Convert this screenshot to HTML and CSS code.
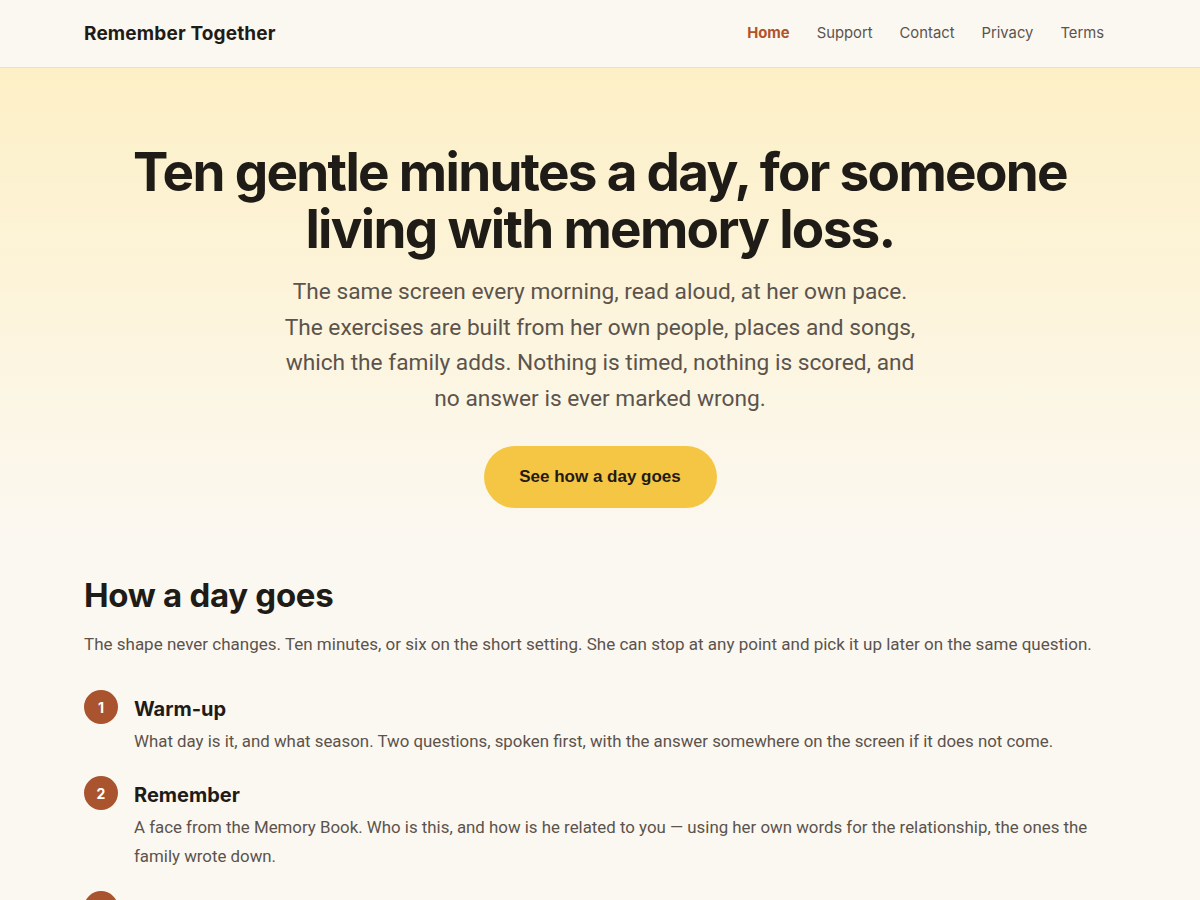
FILE: index.html
```html
<!DOCTYPE html>
<html lang="en">
<head>
<meta charset="utf-8">
<title>Remember Together</title>
<link rel="stylesheet" href="styles.css">
</head>
<body>
<header class="topbar">
  <div class="wrap topbar-inner">
    <a class="brand" href="#">Remember Together</a>
    <nav class="nav">
      <a class="nav-link active" href="#">Home</a>
      <a class="nav-link" href="#">Support</a>
      <a class="nav-link" href="#">Contact</a>
      <a class="nav-link" href="#">Privacy</a>
      <a class="nav-link" href="#">Terms</a>
    </nav>
  </div>
</header>
<main>
  <section class="hero">
    <div class="wrap hero-inner">
      <h1 class="hero-title">Ten gentle minutes a day, for someone living with memory loss.</h1>
      <p class="hero-lead">The same screen every morning, read aloud, at her own pace. The exercises are built from her own people, places and songs, which the family adds. Nothing is timed, nothing is scored, and no answer is ever marked wrong.</p>
      <a class="cta" href="#day">See how a day goes</a>
    </div>
  </section>
  <section class="day" id="day">
    <div class="wrap">
      <h2 class="section-title">How a day goes</h2>
      <p class="section-lead">The shape never changes. Ten minutes, or six on the short setting. She can stop at any point and pick it up later on the same question.</p>
      <ol class="steps">
        <li class="step">
          <span class="step-num">1</span>
          <div class="step-body">
            <h3 class="step-title">Warm-up</h3>
            <p class="step-text">What day is it, and what season. Two questions, spoken first, with the answer somewhere on the screen if it does not come.</p>
          </div>
        </li>
        <li class="step">
          <span class="step-num">2</span>
          <div class="step-body">
            <h3 class="step-title">Remember</h3>
            <p class="step-text">A face from the Memory Book. Who is this, and how is he related to you — using her own words for the relationship, the ones the family wrote down.</p>
          </div>
        </li>
        <li class="step">
          <span class="step-num">3</span>
          <div class="step-body">
            <h3 class="step-title">Place</h3>
            <p class="step-text">A photograph of somewhere she has lived or visited, and a gentle question about it.</p>
          </div>
        </li>
      </ol>
    </div>
  </section>
</main>
</body>
</html>
```

FILE: styles.css
```css
* { box-sizing: border-box; }
html, body { margin: 0; padding: 0; }
body {
  background: #fbf8f1;
  color: #1f1b17;
  font-family: "Inter", "Noto Sans", sans-serif;
}
a { text-decoration: none; color: inherit; }
.wrap {
  width: 1032px;
  margin: 0 auto;
}
.topbar {
  height: 68px;
  border-bottom: 1px solid #e8e1d3;
  background: #fbf8f1;
}
.topbar-inner {
  height: 66px;
  display: flex;
  align-items: center;
  justify-content: space-between;
}
.brand {
  font-family: "Inter", sans-serif;
  font-weight: 700;
  font-size: 19px;
  letter-spacing: 0.15px;
  color: #1f1b17;
}
.nav {
  display: flex;
  gap: 27px;
  margin-right: 12px;
}
.nav-link {
  font-family: "Inter", sans-serif;
  font-size: 14.8px;
  color: #5b534c;
}
.nav-link.active {
  color: #b0532a;
  font-weight: 700;
}
.hero {
  background: linear-gradient(180deg, #fdf0c6 0%, #fbf8f1 100%);
  padding: 76px 0 35px;
}
.hero-inner {
  display: flex;
  flex-direction: column;
  align-items: center;
  text-align: center;
}
.hero-title {
  margin: 0;
  font-family: "Inter", sans-serif;
  font-weight: 700;
  font-size: 53px;
  line-height: 57px;
  letter-spacing: -1.7px;
  color: #1f1b17;
  width: 1032px;
}
.hero-lead {
  margin: 16px 0 0;
  width: 642px;
  font-family: "Roboto", sans-serif;
  font-size: 22.7px;
  line-height: 35.5px;
  color: #5b534c;
}
.cta {
  margin-top: 30px;
  display: inline-flex;
  align-items: center;
  justify-content: center;
  width: 233px;
  height: 62px;
  border-radius: 31px;
  background: #f5c544;
  color: #1f1b17;
  font-family: "Liberation Sans", Arial, sans-serif;
  font-weight: 700;
  font-size: 17px;
}
.day {
  padding: 30px 0 40px;
}
.section-title {
  margin: 0;
  font-family: "Inter", sans-serif;
  font-weight: 700;
  font-size: 33px;
  line-height: 44px;
  letter-spacing: -0.3px;
  color: #1f1b17;
}
.section-lead {
  margin: 14px 0 0;
  font-family: "Roboto", sans-serif;
  font-size: 17px;
  line-height: 26px;
  color: #5b534c;
}
.steps {
  list-style: none;
  margin: 33px 0 0;
  padding: 0;
  display: flex;
  flex-direction: column;
  gap: 20px;
}
.step {
  display: flex;
  gap: 16px;
}
.step-num {
  flex: none;
  width: 34px;
  height: 34px;
  border-radius: 50%;
  background: #a9542e;
  color: #fff;
  font-family: "Inter", sans-serif;
  font-weight: 700;
  font-size: 14px;
  display: flex;
  align-items: center;
  justify-content: center;
}
.step-body { flex: 1; }
.step-title {
  margin: 5px 0 0;
  font-family: "Inter", sans-serif;
  font-weight: 700;
  font-size: 20px;
  line-height: 28px;
  color: #1f1b17;
}
.step-text {
  margin: 4px 0 0;
  font-family: "Roboto", sans-serif;
  font-size: 16.85px;
  line-height: 29px;
  color: #5b534c;
}
```
